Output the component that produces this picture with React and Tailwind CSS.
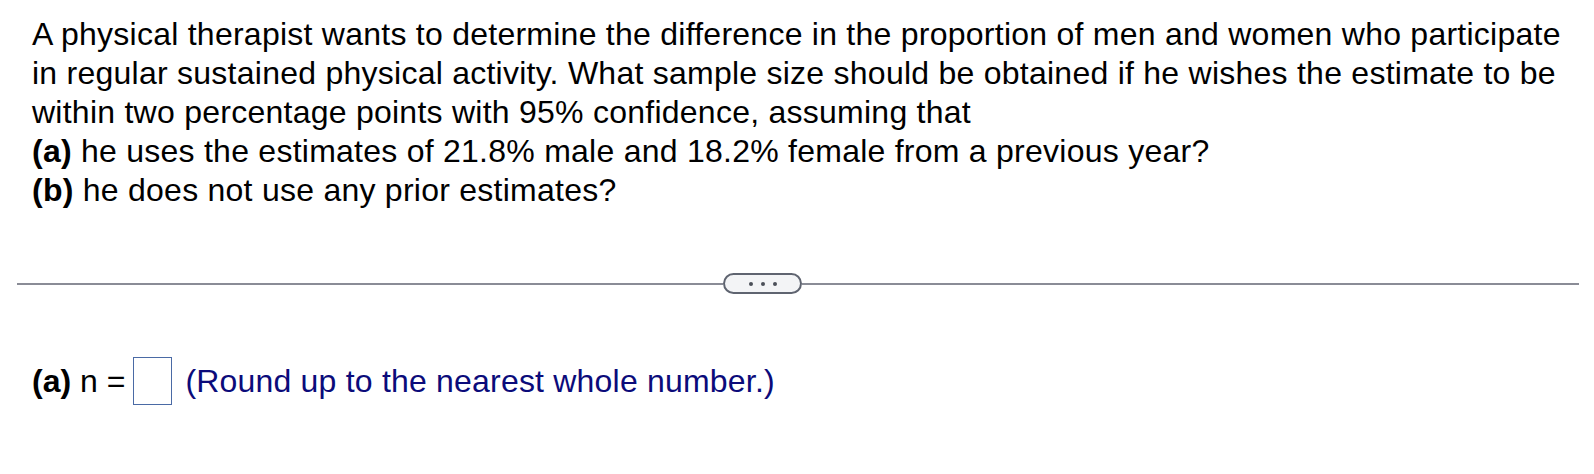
export default function App() {
  return (
    <div className="w-[1594px] h-[474px] bg-white text-black font-['Liberation_Sans',Arial,sans-serif]">
      <div className="pl-[32px] pt-[15px] text-[32px] leading-[39px] tracking-[0.25px] whitespace-nowrap">
        <p>
          A physical therapist wants to determine the difference in the proportion of men and women who participate
          <br />
          in regular sustained physical activity. What sample size should be obtained if he wishes the estimate to be
          <br />
          within two percentage points with 95% confidence, assuming that
        </p>
        <p><strong>(a)</strong> he uses the estimates of 21.8% male and 18.2% female from a previous year?</p>
        <p><strong>(b)</strong> he does not use any prior estimates?</p>
      </div>

      <div className="mt-[63px] flex items-center pl-[17px] pr-[15px]">
        <div className="w-[706px] h-[2px] bg-[#8a8c96]" />
        <div className="w-[79px] h-[21px] rounded-full border-2 border-[#5f6470] bg-[#f3f4f6] flex items-center justify-center gap-[8px]">
          <span className="w-[4px] h-[4px] rounded-full bg-[#4b4f58]" />
          <span className="w-[4px] h-[4px] rounded-full bg-[#4b4f58]" />
          <span className="w-[4px] h-[4px] rounded-full bg-[#4b4f58]" />
        </div>
        <div className="flex-1 h-[2px] bg-[#8a8c96]" />
      </div>

      <div className="mt-[63px] pl-[32px] flex items-center text-[32px] leading-[39px] whitespace-nowrap">
        <span><strong>(a)</strong> n =</span>
        <span className="ml-[8px] w-[39px] h-[48px] border-[1.5px] border-[#4a6aa5] bg-white" />
        <span className="ml-[13px] tracking-[0.2px] text-[#0b0b7a]">(Round up to the nearest whole number.)</span>
      </div>
    </div>
  );
}
